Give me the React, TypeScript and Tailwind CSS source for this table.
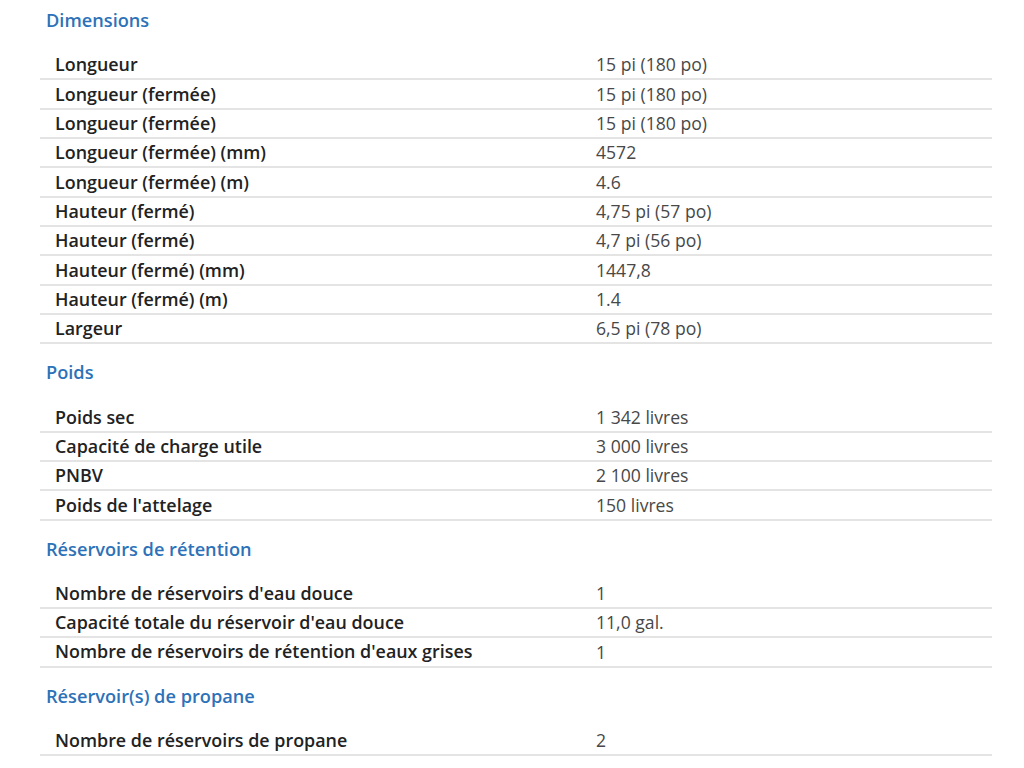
const sections: { title: string; rows: [string, string][] }[] = [
  {
    title: "Dimensions",
    rows: [
      ["Longueur", "15 pi (180 po)"],
      ["Longueur (fermée)", "15 pi (180 po)"],
      ["Longueur (fermée)", "15 pi (180 po)"],
      ["Longueur (fermée) (mm)", "4572"],
      ["Longueur (fermée) (m)", "4.6"],
      ["Hauteur (fermé)", "4,75 pi (57 po)"],
      ["Hauteur (fermé)", "4,7 pi (56 po)"],
      ["Hauteur (fermé) (mm)", "1447,8"],
      ["Hauteur (fermé) (m)", "1.4"],
      ["Largeur", "6,5 pi (78 po)"],
    ],
  },
  {
    title: "Poids",
    rows: [
      ["Poids sec", "1 342 livres"],
      ["Capacité de charge utile", "3 000 livres"],
      ["PNBV", "2 100 livres"],
      ["Poids de l'attelage", "150 livres"],
    ],
  },
  {
    title: "Réservoirs de rétention",
    rows: [
      ["Nombre de réservoirs d'eau douce", "1"],
      ["Capacité totale du réservoir d'eau douce", "11,0 gal."],
      ["Nombre de réservoirs de rétention d'eaux grises", "1"],
    ],
  },
  {
    title: "Réservoir(s) de propane",
    rows: [["Nombre de réservoirs de propane", "2"]],
  },
];

const App = () => {
  return (
    <div
      className="bg-white min-h-[768px] w-[1024px] pt-[8px]"
      style={{ fontFamily: '"Open Sans", "Liberation Sans", sans-serif' }}
    >
      {sections.map((section) => (
        <div key={section.title} className="mb-[16px]">
          <h3 className="h-[24px] leading-[24px] pl-[46px] mb-[19px] text-[18.2px] font-semibold text-[#2d72b8]">
            {section.title}
          </h3>
          <div className="ml-[40px] w-[952px]">
            {section.rows.map(([label, value], i) => (
              <div
                key={label + i}
                className="grid grid-cols-[541px_1fr] h-[29.33px] items-center border-b-2 border-[#e4e4e4] whitespace-nowrap"
              >
                <span className="pl-[15px] text-[17.9px] font-semibold text-[#222]">
                  {label}
                </span>
                <span className="pl-[15px] text-[17.6px] text-[#484848]">{value}</span>
              </div>
            ))}
          </div>
        </div>
      ))}
    </div>
  );
};

export default App;
